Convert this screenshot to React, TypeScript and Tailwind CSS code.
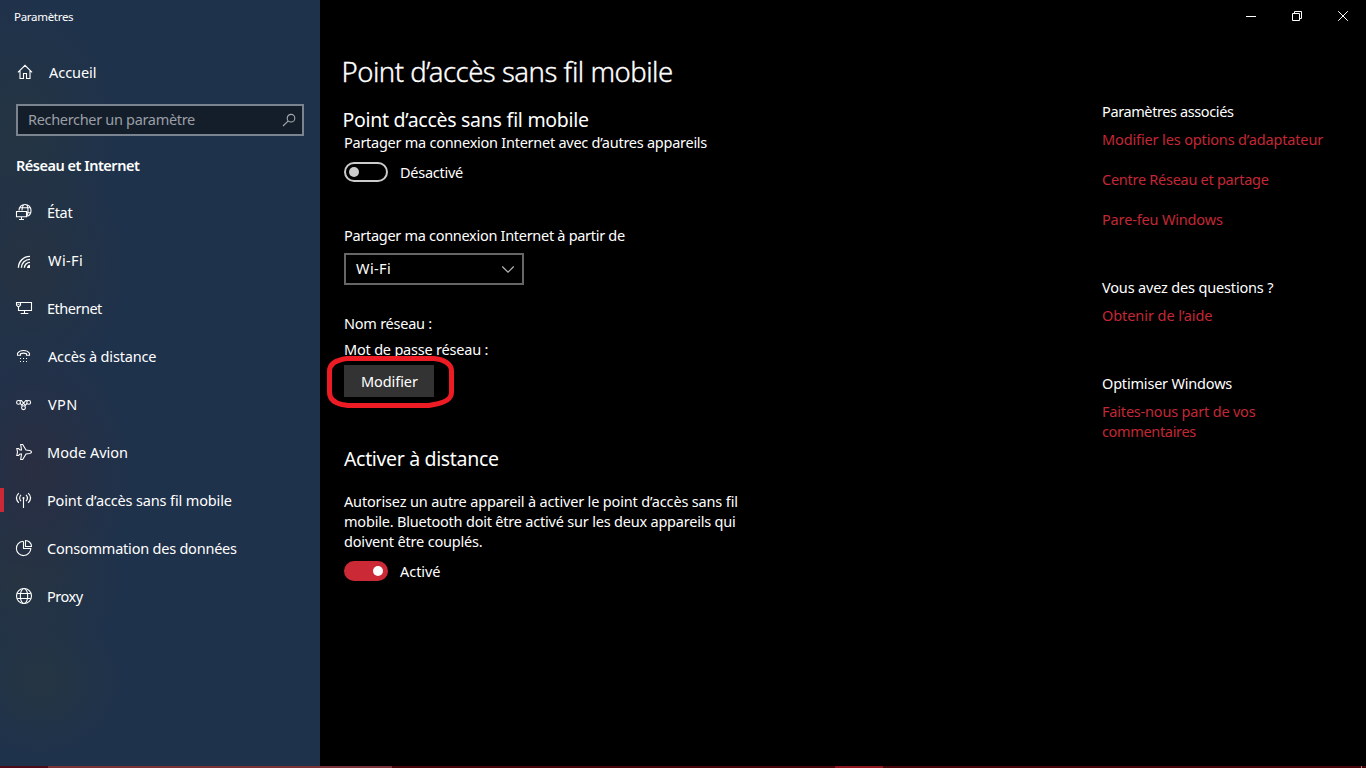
import type { ReactNode } from "react";

function Icon({ children }: { children: ReactNode }) {
  return (
    <svg viewBox="0 0 16 16" className="size-4 shrink-0 overflow-visible" fill="none" stroke="#fff" strokeWidth="1.1">
      {children}
    </svg>
  );
}

const navItems: { label: string; text: string; active?: boolean; icon: ReactNode }[] = [
  {
    label: "État",
    text: "pl-[15px] tracking-[-0.35px]",
    icon: (
      <>
        <path d="M3 6.5C3 3.100 5.600.500 9 .500s6 2.600 6 6c0 2.800-1.500 5-3.800 5.800M6 6.500C6.200 3 7.300.500 9 .500s3 2.500 3 6c0 2-.3 3.800-.8 5M4 3.800h10.500M11 8.700h3.700" />
        <path d="M.5 7.500h10v5.200H.5zM5.500 12.700v2.600M3 15.500h5" />
      </>
    ),
  },
  {
    label: "Wi-Fi",
    text: "pl-4 tracking-[0.4px]",
    icon: (
      <>
        <path d="M2.4 15.8C2.4 9.4 7.6 4.4 14 4.4M5.4 15.8c0-4.7 3.9-8.4 8.6-8.4M8.4 15.8c0-3 2.5-5.4 5.6-5.4" strokeWidth="1.4" />
        <path d="M11 15.9c0-1.7 1.2-3.2 3-3.2v3.2z" fill="#fff" stroke="none" />
      </>
    ),
  },
  {
    label: "Ethernet",
    text: "pl-[15px] tracking-[-0.5px]",
    icon: <path d="M4.5 2.5h11v8h-13V7M.5 2.5h4V5L3.2 6.5H1.8L.5 5zM1.5 4.2h2M8.5 10.5v3M4.7 13.5h7.6" />,
  },
  {
    label: "Accès à distance",
    text: "pl-4 tracking-[-0.17px]",
    icon: (
      <>
        <path d="M1.5 7.3V5.2C2.8 3.4 5 2.5 7.5 2.5s4.7.9 6 2.7v2.1h-3V5.7c-1.8-.7-4.2-.7-6 0v1.6z" />
        <path d="M4 10.5h1M7 10.5h1M10 10.5h1M4 13.5h1M7 13.5h1M10 13.5h1" />
      </>
    ),
  },
  {
    label: "VPN",
    text: "pl-4 tracking-[0.4px]",
    icon: (
      <>
        <circle cx="2.5" cy="6.4" r="1.9" />
        <circle cx="12.7" cy="6.4" r="1.9" />
        <circle cx="7.5" cy="11.7" r="1.9" />
        <path d="M3.5 4.6 5.4 4.5 9 8.9M11.5 4.6 9.8 4.5 6 8.9M4.3 7.3 6.3 10M10.9 7.3 8.9 10" />
      </>
    ),
  },
  {
    label: "Mode Avion",
    text: "pl-[15px] tracking-[0.02px]",
    icon: (
      <path d="M5.5 6 4.7.5h2L10 6l3.700.5c1 .2 1.800.700 1.800 1.500s-.8 1.300-1.800 1.500L10 10l-3.300 5.500h-2L5.500 10H4l-1.500 1.500H.8L1.500 8 .8 4.500h1.700L4 6z" />
    ),
  },
  {
    label: "Point d’accès sans fil mobile",
    text: "pl-[15px] tracking-[-0.15px]",
    active: true,
    icon: (
      <>
        <path d="M2.8 1.2C-.2 4.2-.2 7.8 2.8 10.8M12.2 1.2c3 3 3 6.6 0 9.6M5 2.9c-1.8 1.8-1.8 4.4 0 6.2M10 2.9c1.8 1.8 1.8 4.4 0 6.2M7.5 6v10" />
        <circle cx="7.5" cy="6" r=".5" />
      </>
    ),
  },
  {
    label: "Consommation des données",
    text: "pl-[15px] tracking-[-0.22px]",
    icon: <path d="M7 1.2a7.2 7.2 0 1 0 7.8 7.3H7.5V1.2M9.5.5a6 6 0 0 1 6 6h-6z" />,
  },
  {
    label: "Proxy",
    text: "pl-[15px] tracking-[-0.45px]",
    icon: (
      <>
        <circle cx="8" cy="8" r="7.5" />
        <ellipse cx="8" cy="8" rx="3.7" ry="7.5" />
        <path d="M1.2 5.5h13.6M1.2 10.5h13.6" />
      </>
    ),
  },
];

function Sidebar() {
  return (
    <aside className="flex w-80 shrink-0 flex-col bg-[#1f324b] bg-[radial-gradient(ellipse_95px_130px_at_20px_130px,#243442_0%,transparent_100%),radial-gradient(ellipse_95px_120px_at_30px_265px,#263241_0%,transparent_100%),radial-gradient(ellipse_95px_130px_at_35px_470px,#2a2e41_0%,transparent_100%),radial-gradient(ellipse_100px_90px_at_20px_580px,#263441_0%,transparent_100%),radial-gradient(ellipse_80px_75px_at_40px_680px,#253542_0%,transparent_100%)]">
      <div className="h-8 pt-[7px] pl-3.5 text-[11.5px] leading-5 tracking-[-0.3px]">Paramètres</div>
      <div className="mt-[30px] flex h-5 items-center pl-[17px]">
        <Icon>
          <path d="M.9 8.3 8 1.3l7.1 7M3 6.5v8h3.5v-5h3v5H13v-8" />
        </Icon>
        <span className="pl-4 tracking-[-0.05px]">Accueil</span>
      </div>
      <div className="mx-4 mt-[22px] flex h-8 items-center justify-between border-2 border-[#7a8490] bg-[#141e2b] pr-[7px] pl-2.5 text-[#9b9fa5]">
        <span className="pb-0.5 tracking-[-0.32px]">Rechercher un paramètre</span>
        <svg viewBox="0 0 12 12" className="size-3 overflow-visible" fill="none" stroke="#a5a9ae" strokeWidth="1.1">
          <circle cx="8" cy="4.2" r="3.8" />
          <path d="M5.3 6.9 0 12" />
        </svg>
      </div>
      <h2 className="mt-[19px] pl-4 font-semibold tracking-[-0.48px]">Réseau et Internet</h2>
      <nav className="mt-[13px] flex flex-col">
        {navItems.map((item) => (
          <a key={item.label} className="flex h-12 items-center">
            <span className={item.active ? "h-6 w-1 bg-[#cc2936]" : "h-6 w-1"} />
            <span className="flex items-center pl-3">
              <Icon>{item.icon}</Icon>
              <span className={item.text}>{item.label}</span>
            </span>
          </a>
        ))}
      </nav>
    </aside>
  );
}

function Content() {
  return (
    <main className="flex w-[440px] flex-col items-start pl-6">
      <h1 className="mt-[54px] -ml-[2.5px] text-[27.5px] leading-9 font-light tracking-[-0.5px] [-webkit-text-stroke:0.35px_#fff]">
        Point d’accès sans fil mobile
      </h1>
      <h2 className="mt-[17px] -ml-[1.5px] text-[19.5px] leading-[26px] tracking-[-0.28px]">
        Point d’accès sans fil mobile
      </h2>
      <p className="-mt-px tracking-[-0.26px]">Partager ma connexion Internet avec d’autres appareils</p>
      <div className="mt-2.5 flex items-center gap-3">
        <span className="flex h-5 w-11 items-center rounded-full border-2 border-[#ccc] pl-[3px]">
          <span className="size-2.5 rounded-full bg-[#ccc]" />
        </span>
        <span className="tracking-[-0.26px]">Désactivé</span>
      </div>
      <p className="mt-[43px] tracking-[-0.295px]">Partager ma connexion Internet à partir de</p>
      <div className="mt-2 flex h-8 w-[180px] items-center justify-between border-2 border-[#666] pr-2 pl-2.5">
        <span className="pb-0.5 tracking-[0.4px]">Wi-Fi</span>
        <svg viewBox="0 0 12 7" className="h-[7px] w-3 overflow-visible" fill="none" stroke="#bbb" strokeWidth="1.1">
          <path d="M.3.5 6 6.2 11.7.5" />
        </svg>
      </div>
      <p className="mt-7 tracking-[-0.24px]">Nom réseau :</p>
      <p className="mt-1.5 tracking-[-0.2px]">Mot de passe réseau :</p>
      <div className="relative mt-1.5">
        <button className="flex h-8 w-[90px] items-center bg-[#333] pl-[17px] tracking-[-0.1px]">Modifier</button>
        <svg
          viewBox="0 0 127 52"
          className="absolute -top-[9px] -left-[17px] h-[52px] w-[127px] max-w-none"
          fill="none"
          stroke="#ed1c24"
          strokeWidth="5"
        >
          <path d="M20 2.500H107C116 3 124.500 7.500 124.500 15V36C124.500 43 119 46.500 107 48.500L102 49.500H21L15 48.500C8 47 2.500 43 2.500 36V15C2.500 8 9 4 20 2.500Z" />
        </svg>
      </div>
      <h2 className="mt-[49px] text-[19.5px] leading-[26px] tracking-[-0.34px]">Activer à distance</h2>
      <p className="mt-[19px] whitespace-nowrap">
        <span className="block tracking-[-0.16px]">Autorisez un autre appareil à activer le point d’accès sans fil</span>
        <span className="block tracking-[-0.205px]">mobile. Bluetooth doit être activé sur les deux appareils qui</span>
        <span className="block tracking-[-0.18px]">doivent être couplés.</span>
      </p>
      <div className="mt-2.5 flex items-center gap-3">
        <span className="flex h-5 w-11 items-center justify-end rounded-full bg-[#cc2936] pr-[5px]">
          <span className="size-2.5 rounded-full bg-white" />
        </span>
        <span className="tracking-[-0.05px]">Activé</span>
      </div>
    </main>
  );
}

function Related() {
  return (
    <aside className="mr-6 ml-auto flex w-60 flex-col whitespace-nowrap text-[#c42735]">
      <h3 className="mt-[101px] tracking-[-0.39px] text-white">Paramètres associés</h3>
      <a className="mt-2 tracking-[-0.145px]">Modifier les options d’adaptateur</a>
      <a className="mt-5 tracking-[-0.27px]">Centre Réseau et partage</a>
      <a className="mt-5 tracking-[-0.16px]">Pare-feu Windows</a>
      <h3 className="mt-12 tracking-[-0.165px] text-white">Vous avez des questions ?</h3>
      <a className="mt-2 tracking-[-0.07px]">Obtenir de l’aide</a>
      <h3 className="mt-12 tracking-[-0.19px] text-white">Optimiser Windows</h3>
      <a className="mt-2 flex flex-col">
        <span className="tracking-[-0.19px]">Faites-nous part de vos</span>
        <span className="tracking-[-0.34px]">commentaires</span>
      </a>
    </aside>
  );
}

function WindowControls() {
  return (
    <div className="absolute top-0 right-0 flex">
      {["M0 5.5h10", "M.5 2.5h7v7h-7zM2.5 2.5v-2h7v7h-2", "M.2.2l9.6 9.6M9.8.2.2 9.8"].map((d) => (
        <button key={d} className="flex h-8 w-[46px] items-center justify-center">
          <svg viewBox="0 0 10 10" className="size-2.5 overflow-visible" fill="none" stroke="#fff">
            <path d={d} />
          </svg>
        </button>
      ))}
    </div>
  );
}

export default function App() {
  return (
    <div className="relative flex h-[768px] w-[1366px] flex-col overflow-hidden bg-black font-['Noto_Sans',sans-serif] text-[14.5px] leading-5 text-white [font-feature-settings:'liga'_1]">
      <div className="flex h-[766px]">
        <Sidebar />
        <Content />
        <Related />
      </div>
      <div className="flex h-0.5 bg-[#450509]">
        <span className="w-12 bg-[#4d0c17]" />
        <span className="w-[344px] bg-[#7b3338]" />
        <span className="ml-[443px] w-12 bg-[#8c151e]" />
        <span className="mr-1 ml-auto w-px bg-[#a08084]" />
      </div>
      <WindowControls />
    </div>
  );
}
